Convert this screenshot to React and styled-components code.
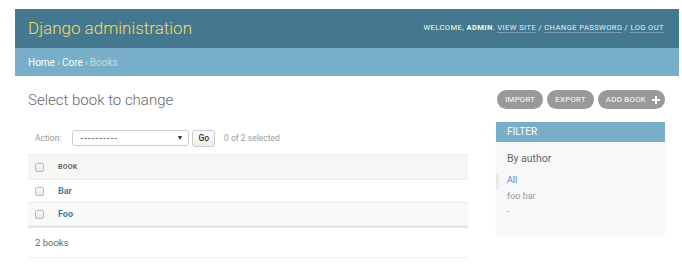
import styled, { createGlobalStyle } from 'styled-components';

const GlobalStyle = createGlobalStyle`
  body {
    margin: 0;
    background: #fff;
    font-family: Roboto, 'Liberation Sans', sans-serif;
    color: #333;
  }
`;

const Page = styled.div`
  padding: 9px 3px 0 15px;
`;

const Header = styled.header`
  align-items: center;
  background: #447890;
  display: flex;
  height: 39px;
  justify-content: space-between;
  padding: 0 15px 0 13px;
`;

const Branding = styled.h1`
  color: #f5dd5d;
  font-size: 17px;
  font-weight: 300;
  margin: 0;
  padding-bottom: 1px;
`;

const UserTools = styled.div`
  color: #ffc;
  font-size: 7.6px;
  letter-spacing: 0.4px;
  padding-bottom: 3px;
  text-transform: uppercase;

  strong {
    color: #fafae0;
    font-weight: 700;
  }

  a {
    border-bottom: 1px solid rgba(255, 255, 255, 0.3);
    color: #e6eef2;
    text-decoration: none;
  }
`;

const Breadcrumbs = styled.div`
  align-items: center;
  background: #79aec8;
  color: #c4dce8;
  display: flex;
  font-size: 10px;
  height: 28px;
  padding: 0 13px;

  a {
    color: #fff;
    text-decoration: none;
  }

  .sep {
    margin: 0 2px;
  }
`;

const Content = styled.div`
  padding: 14px 14px 0 13px;
`;

const TopRow = styled.div`
  align-items: flex-start;
  display: flex;
  justify-content: space-between;
`;

const Title = styled.h1`
  color: #666;
  font-size: 15px;
  font-weight: 300;
  line-height: 19px;
  margin: 1px 0 0;
`;

const Tools = styled.div`
  display: flex;
  gap: 4px;
`;

const ToolButton = styled.a`
  align-items: center;
  background: #999;
  border-radius: 10px;
  color: #fff;
  display: flex;
  font-size: 7.8px;
  gap: 6px;
  height: 19px;
  letter-spacing: 0.3px;
  padding: 0 ${({ $icon }) => ($icon ? '5px' : '8px')} 0 8px;
  text-transform: uppercase;

  svg {
    height: 8px;
    width: 8px;
  }
`;

const Body = styled.div`
  display: flex;
  gap: 28px;
  margin-top: 12px;
`;

const Changelist = styled.div`
  flex: 0 0 440px;
`;

const Actions = styled.div`
  align-items: center;
  color: #999;
  display: flex;
  font-size: 8.5px;
  height: 16px;
  margin: 8px 0 8px 7px;

  label {
    color: #999;
    margin-right: 11px;
  }
`;

const Select = styled.div`
  align-items: center;
  border: 1px solid #ccc;
  border-radius: 3px;
  box-sizing: border-box;
  color: #333;
  display: flex;
  font-size: 9px;
  height: 16px;
  justify-content: space-between;
  padding: 0 5px 0 7px;
  width: 117px;

  .dashes {
    letter-spacing: 1.3px;
  }

  .arrow {
    font-size: 7px;
  }
`;

const GoButton = styled.button`
  background: linear-gradient(#fff, #eee);
  border: 1px solid #ccc;
  border-radius: 3px;
  color: #333;
  font-family: inherit;
  font-size: 8.5px;
  font-weight: 500;
  height: 17px;
  margin: 0 9px 0 3px;
  padding: 0 5px;
`;

const Table = styled.div`
  border-bottom: 2px solid #e4e4e4;
`;

const Row = styled.div`
  align-items: center;
  background: ${({ $bg }) => $bg || '#fff'};
  border-bottom: 1px solid #eee;
  display: flex;
  height: ${({ $h }) => $h || '22px'};
`;

const HeadRow = styled(Row)`
  border-top: 1px solid #eee;
`;

const Check = styled.span`
  background: linear-gradient(#fafafa, #e6e6e6);
  border: 1px solid #bbb;
  border-radius: 2px;
  box-sizing: border-box;
  height: 9px;
  margin: 0 14px 0 7px;
  width: 9px;
`;

const HeadCell = styled.span`
  color: #666;
  font-size: 7px;
  font-weight: 700;
  letter-spacing: 0.2px;
  text-transform: uppercase;
`;

const ItemLink = styled.a`
  color: #447e9b;
  font-size: 9px;
  font-weight: 700;
`;

const Paginator = styled.div`
  align-items: center;
  border-bottom: 1px solid #eee;
  color: #666;
  display: flex;
  font-size: 9.5px;
  height: 29px;
  padding-left: 7px;
`;

const Filter = styled.div`
  align-self: flex-start;
  background: #f8f8f8;
  box-shadow: 0 1px 2px rgba(0, 0, 0, 0.04);
  flex: 0 0 169px;
  padding-bottom: 14px;
`;

const FilterTitle = styled.h2`
  background: #79aec8;
  color: #fff;
  font-size: 10px;
  font-weight: 400;
  height: 20px;
  line-height: 20px;
  margin: 0;
  padding-left: 11px;
`;

const FilterHeading = styled.h3`
  color: #666;
  font-size: 10.5px;
  font-weight: 400;
  margin: 10px 0 8px 11px;
`;

const FilterList = styled.ul`
  list-style: none;
  margin: 0;
  padding: 0;
`;

const FilterItem = styled.li`
  border-left: 3px solid ${({ $selected }) => ($selected ? '#eaeaea' : 'transparent')};
  color: ${({ $selected }) => ($selected ? '#5b80b2' : '#999')};
  font-size: 9px;
  line-height: 15.5px;
  padding-left: 8px;
`;

const PlusIcon = () => (
  <svg viewBox="0 0 8 8">
    <path d="M3 0h2v3h3v2H5v3H3V5H0V3h3z" fill="#fff" />
  </svg>
);

const books = ['Bar', 'Foo'];
const authors = ['All', 'foo bar', '-'];

const App = () => (
  <>
    <GlobalStyle />
    <Page>
      <Header>
        <Branding>Django administration</Branding>
        <UserTools>
          Welcome, <strong>admin</strong>. <a>View site</a> / <a>Change password</a> / <a>Log out</a>
        </UserTools>
      </Header>
      <Breadcrumbs>
        <a>Home</a>
        <span className="sep">›</span>
        <a>Core</a>
        <span className="sep">›</span>
        Books
      </Breadcrumbs>
      <Content>
        <TopRow>
          <Title>Select book to change</Title>
          <Tools>
            <ToolButton>Import</ToolButton>
            <ToolButton>Export</ToolButton>
            <ToolButton $icon>
              Add book
              <PlusIcon />
            </ToolButton>
          </Tools>
        </TopRow>
        <Body>
          <Changelist>
            <Actions>
              <label>Action:</label>
              <Select>
                <span className="dashes">----------</span>
                <span className="arrow">▼</span>
              </Select>
              <GoButton>Go</GoButton>
              <span>0 of 2 selected</span>
            </Actions>
            <Table>
              <HeadRow $bg="#f6f6f6" $h="24px">
                <Check />
                <HeadCell>Book</HeadCell>
              </HeadRow>
              {books.map((book, i) => (
                <Row key={book} $bg={i % 2 ? '#f9f9f9' : '#fff'}>
                  <Check />
                  <ItemLink>{book}</ItemLink>
                </Row>
              ))}
            </Table>
            <Paginator>2 books</Paginator>
          </Changelist>
          <Filter>
            <FilterTitle>FILTER</FilterTitle>
            <FilterHeading>By author</FilterHeading>
            <FilterList>
              {authors.map((author, i) => (
                <FilterItem key={author} $selected={i === 0}>
                  {author}
                </FilterItem>
              ))}
            </FilterList>
          </Filter>
        </Body>
      </Content>
    </Page>
  </>
);

export default App;
